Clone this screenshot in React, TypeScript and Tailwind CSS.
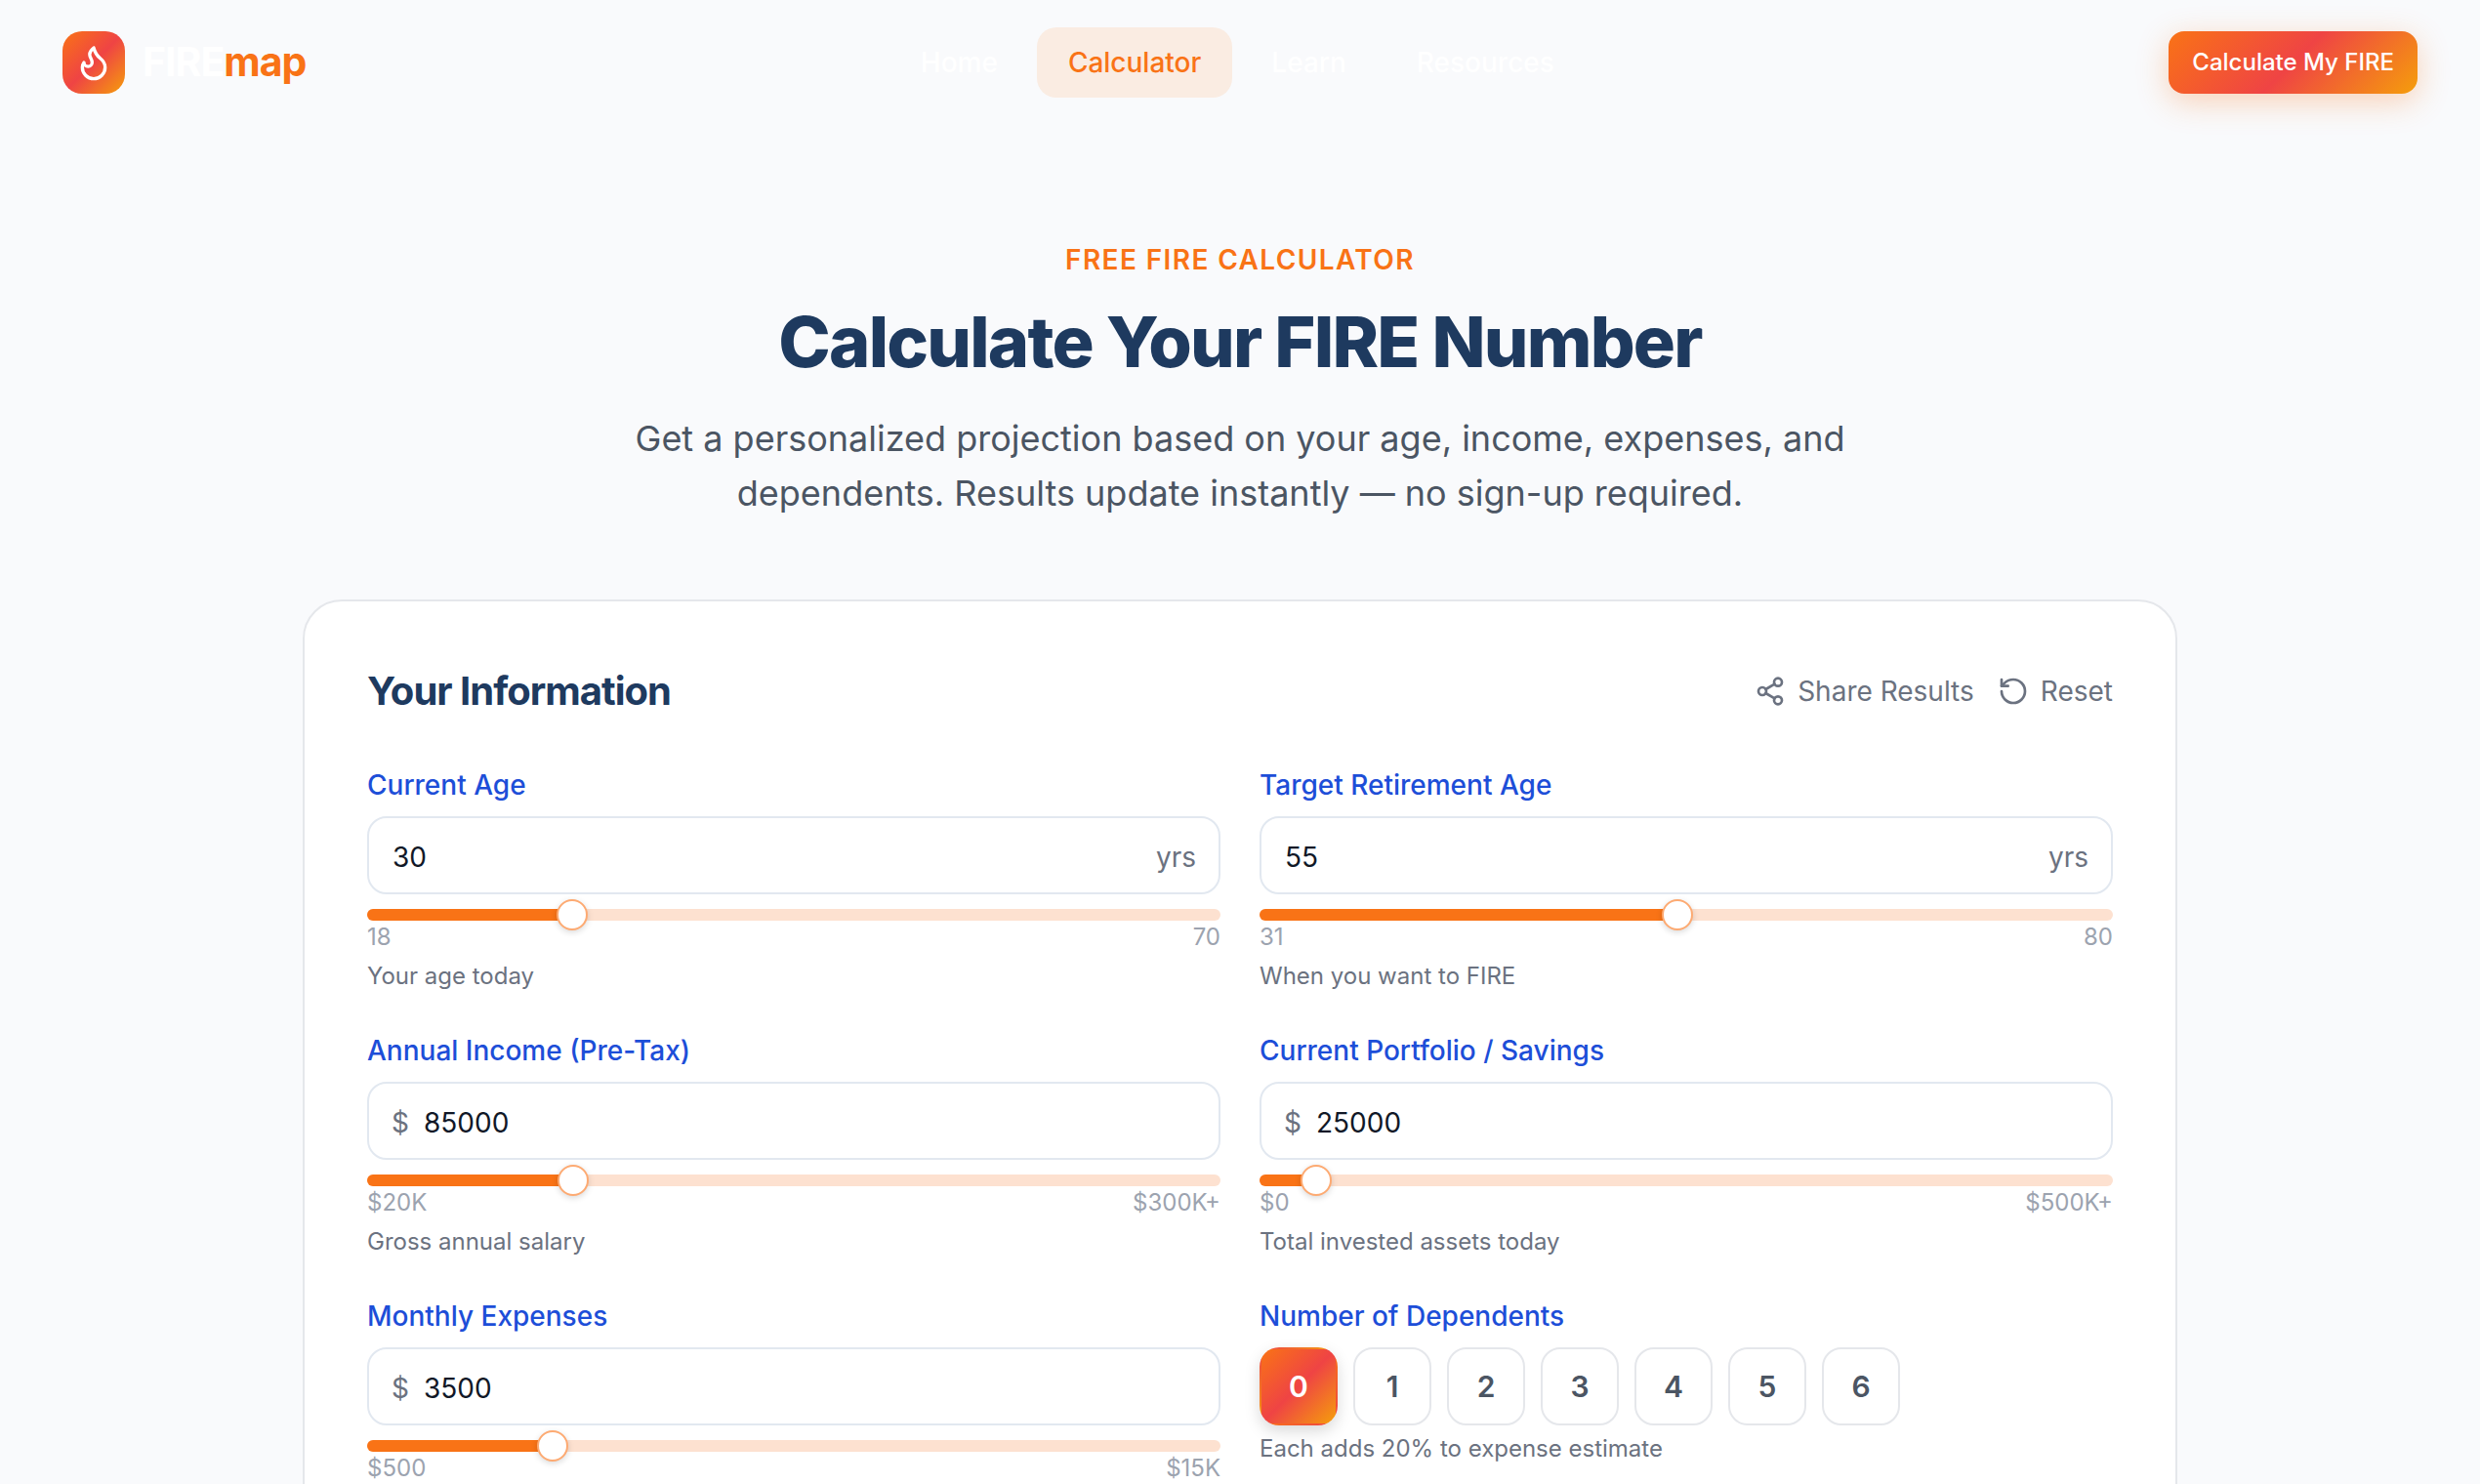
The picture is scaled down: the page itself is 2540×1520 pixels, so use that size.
import { Flame, RotateCcw, Share2 } from "lucide-react";

const navLinks = ["Home", "Calculator", "Learn", "Resources"];
const dependents = [0, 1, 2, 3, 4, 5, 6];

interface FieldProps {
	label: string;
	value: string;
	prefix?: string;
	suffix?: string;
	percent: number;
	min: string;
	max: string;
	hint: string;
}

const fields: FieldProps[] = [
	{ label: "Current Age", value: "30", suffix: "yrs", percent: 23.08, min: "18", max: "70", hint: "Your age today" },
	{ label: "Target Retirement Age", value: "55", suffix: "yrs", percent: 48.98, min: "31", max: "80", hint: "When you want to FIRE" },
	{ label: "Annual Income (Pre-Tax)", value: "85000", prefix: "$", percent: 23.21, min: "$20K", max: "$300K+", hint: "Gross annual salary" },
	{ label: "Current Portfolio / Savings", value: "25000", prefix: "$", percent: 5, min: "$0", max: "$500K+", hint: "Total invested assets today" },
];

function Slider({ percent }: { percent: number }) {
	const center = `calc(16px + (100% - 32px) * ${percent / 100})`;
	return (
		<div className="relative mt-[15px] h-3 rounded-full bg-[#fde1d0]">
			<div className="h-3 rounded-full bg-[#f97316]" style={{ width: center }} />
			<div
				className="absolute top-1/2 h-8 w-8 -translate-x-1/2 -translate-y-1/2 rounded-full border-2 border-[#fdaa72] bg-white shadow-[0_2px_6px_rgba(0,0,0,0.15)]"
				style={{ left: center }}
			/>
		</div>
	);
}

function Field({ label, value, prefix, suffix, percent, min, max, hint }: FieldProps) {
	return (
		<div>
			<div className="mb-[15px] text-[28px] leading-[34px] font-medium text-[#1d4ed8]">{label}</div>
			<div className="flex h-20 items-center rounded-[20px] border-2 border-[#e2e8f0] bg-white pt-[4px] pr-[23px] pl-[23px] text-[28px]">
				{prefix && <span className="mr-[15px] text-[#6b7280]">{prefix}</span>}
				<span className={prefix ? "flex-1 text-[#111827]" : "flex-1 pl-[1px] text-[#111827]"}>{value}</span>
				{suffix && <span className="text-[#6b7280]">{suffix}</span>}
			</div>
			<Slider percent={percent} />
			<div className="flex justify-between pt-[2px] text-[24px] leading-[30px] text-[#9ca3af]">
				<span>{min}</span>
				<span>{max}</span>
			</div>
			<div className="mt-[7px] text-[24px] leading-[36px] text-[#6b7280]">{hint}</div>
		</div>
	);
}

export default function App() {
	return (
		<div className="h-[1520px] overflow-hidden bg-[#f9fafc] font-['Inter',sans-serif]">
			<nav className="flex h-32 items-center justify-between px-16">
				<div className="flex items-center gap-[18px]">
					<div className="flex h-16 w-16 items-center justify-center rounded-[20px] bg-[linear-gradient(135deg,#f97316,#ef4444,#f59e0b)]">
						<Flame size={40} color="white" strokeWidth={2} />
					</div>
					<div className="text-[41px] font-bold tracking-tight">
						<span className="text-white">FIRE</span>
						<span className="text-[#f97316]">map</span>
					</div>
				</div>
				<div className="flex items-center gap-2">
					{navLinks.map((link) => (
						<div
							key={link}
							className={
								link === "Calculator"
									? "flex h-[72px] items-center rounded-[20px] bg-[#faece2] px-8 text-[28px] font-medium text-[#f97316]"
									: "flex h-[72px] items-center rounded-[20px] px-8 text-[28px] font-medium text-white"
							}
						>
							{link}
						</div>
					))}
				</div>
				<button
					type="button"
					className="flex h-16 items-center rounded-2xl bg-[linear-gradient(135deg,#f97316,#ef4444,#f59e0b)] px-6 text-[24px] font-medium text-white shadow-[0_8px_32px_rgba(249,115,22,0.3)]"
				>
					Calculate My FIRE
				</button>
			</nav>

			<header className="pt-[118px] text-center">
				<div className="text-[28px] leading-10 font-semibold tracking-[0.05em] text-[#f97316]">
					FREE FIRE CALCULATOR
				</div>
				<h1 className="mt-[21px] text-[72px] leading-[86px] font-extrabold tracking-tight text-[#1e3a5f]">
					Calculate Your FIRE Number
				</h1>
				<p className="mx-auto mt-[28px] max-w-[1280px] pb-[1px] text-[36px] leading-[56px] text-[#4b5563]">
					Get a personalized projection based on your age, income, expenses, and dependents. Results
					update instantly — no sign-up required.
				</p>
			</header>

			<main className="mx-auto mt-20 w-[1920px] rounded-[40px] border-2 border-[#e5e7eb] bg-white px-16 pt-[58px] pb-16">
				<div className="mb-[45px] flex items-center justify-between">
					<h2 className="text-[40px] leading-[68px] font-bold tracking-tight text-[#1e3a5f]">
						Your Information
					</h2>
					<div className="flex items-center gap-6 text-[28px] text-[#6b7280]">
						<button type="button" className="flex items-center gap-3">
							<Share2 size={32} strokeWidth={2} />
							Share Results
						</button>
						<button type="button" className="flex items-center gap-3">
							<RotateCcw size={32} strokeWidth={2} />
							Reset
						</button>
					</div>
				</div>

				<div className="grid grid-cols-2 gap-x-10 gap-y-[41px]">
					{fields.map((field) => (
						<Field key={field.label} {...field} />
					))}
					<Field
						label="Monthly Expenses"
						value="3500"
						prefix="$"
						percent={20.69}
						min="$500"
						max="$15K"
						hint="Housing, food, transport, etc."
					/>
					<div>
						<div className="mb-[15px] text-[28px] leading-[34px] font-medium text-[#1d4ed8]">
							Number of Dependents
						</div>
						<div className="flex gap-4">
							{dependents.map((count) => (
								<div
									key={count}
									className={
										count === 0
											? "flex h-20 w-20 items-center justify-center rounded-[20px] border-2 border-transparent bg-[linear-gradient(135deg,#f97316,#ef4444,#f59e0b)] text-[30px] font-semibold text-white shadow-[0_6px_16px_rgba(0,0,0,0.15)]"
											: "flex h-20 w-20 items-center justify-center rounded-[20px] border-2 border-[#e5e7eb] bg-white text-[30px] font-semibold text-[#4b5563]"
									}
								>
									{count}
								</div>
							))}
						</div>
						<div className="mt-1.5 text-[24px] leading-[36px] text-[#6b7280]">
							Each adds 20% to expense estimate
						</div>
					</div>
				</div>
			</main>
		</div>
	);
}
